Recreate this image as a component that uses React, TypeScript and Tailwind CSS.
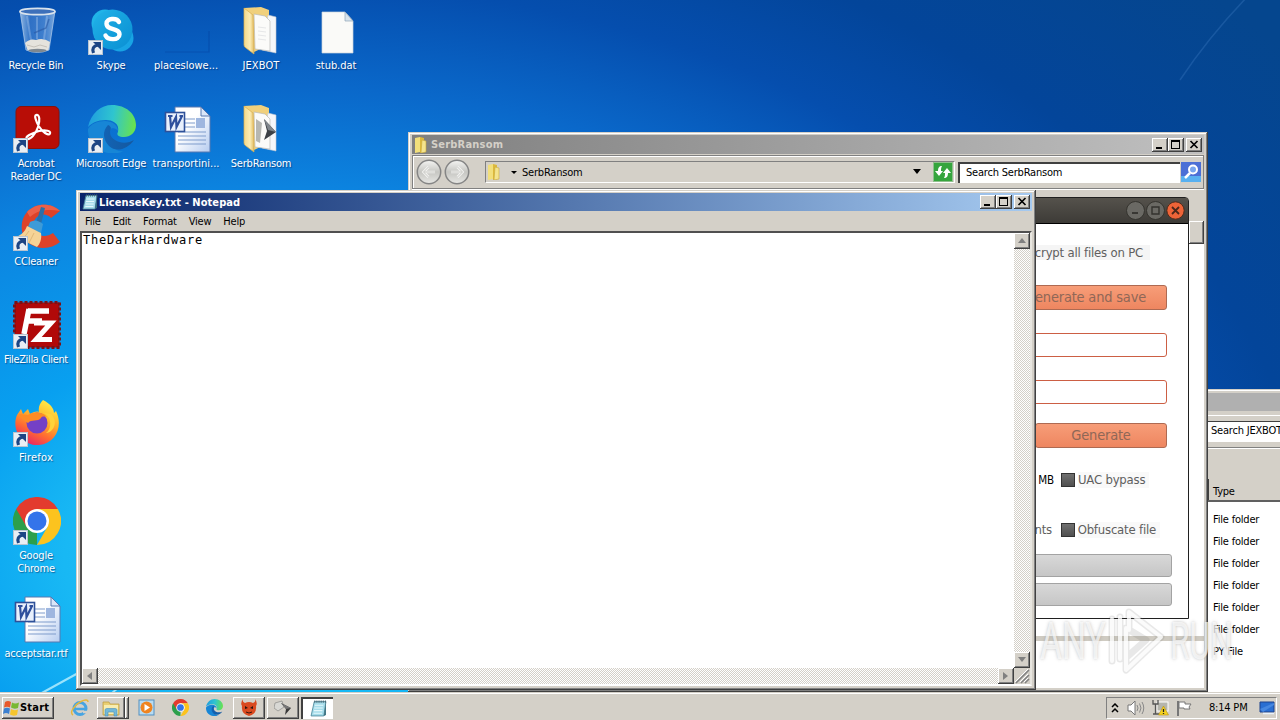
import React from 'react';
import clsx from 'clsx';

const RAISED = 'bg-[#d4d0c8] shadow-[inset_-1px_-1px_0_#404040,inset_1px_1px_0_#fff,inset_-2px_-2px_0_#808080]';
const FRAME = 'bg-[#d4d0c8] shadow-[inset_-1px_-1px_0_#404040,inset_1px_1px_0_#d4d0c8,inset_-2px_-2px_0_#808080,inset_2px_2px_0_#fff]';
const TRACK = 'bg-[repeating-conic-gradient(#d4d0c8_0_25%,#fff_0_50%)] bg-[length:2px_2px]';

type IconProps = { size?: number };

const Shortcut = () => (
  <svg className="absolute bottom-0 left-0" width="15" height="15" viewBox="0 0 15 15">
    <rect width="15" height="15" fill="#e9eef4" />
    <rect x=".5" y=".5" width="14" height="14" fill="none" stroke="#b8c4d0" />
    <path d="M5 2h8v8z" fill="#1d4584" />
    <path d="M10 5Q3 6.500 5.500 13" fill="none" stroke="#1d4584" strokeWidth="3.200" />
  </svg>
);

const RecycleBin = () => (
  <svg width="48" height="48" viewBox="0 0 48 48">
    <defs>
      <linearGradient id="bin" x1="0" x2="1">
        <stop offset="0" stopColor="#c3dcf4" stopOpacity=".75" />
        <stop offset=".3" stopColor="#4b86d2" stopOpacity=".6" />
        <stop offset=".7" stopColor="#5f97dc" stopOpacity=".65" />
        <stop offset="1" stopColor="#a9caee" stopOpacity=".7" />
      </linearGradient>
    </defs>
    <path d="M7 4l6 39q11 5 23 0l6-39z" fill="url(#bin)" stroke="#a9c7e8" strokeWidth=".8" />
    <path d="M12 36q5-5 11-3 7-3 14 2l-1.500 8q-11 4-21 0z" fill="#e5e3dd" />
    <path d="M14 38l7 2 6-2 7 2" stroke="#c6c2ba" fill="none" />
    <path d="M14 9l4 24M34 9l-3 23M24 10v22" stroke="#e4f1ff" strokeOpacity=".25" strokeWidth="2" />
    <path d="M36 12l-3 9-12 5" stroke="#2a58a4" strokeOpacity=".6" fill="none" strokeWidth="1.500" />
    <ellipse cx="24.500" cy="4.500" rx="17.500" ry="3.200" fill="#3d70ba" stroke="#d8e2ec" strokeWidth="1.800" />
    <ellipse cx="24.500" cy="43.500" rx="9" ry="1.800" fill="#7f8890" />
  </svg>
);

const Skype = () => (
  <svg width="48" height="48" viewBox="0 0 48 48">
    <defs>
      <linearGradient id="sky" x1="0" x2="1" y2="1">
        <stop offset="0" stopColor="#22b4ea" />
        <stop offset=".5" stopColor="#15a0dc" />
        <stop offset="1" stopColor="#0a8fd4" />
      </linearGradient>
    </defs>
    <circle cx="17" cy="16" r="13.500" fill="#20b4e8" />
    <circle cx="32" cy="31" r="13.500" fill="#18a4e4" />
    <circle cx="24.500" cy="22.500" r="20" fill="url(#sky)" />
    <path d="M31 15C29 10.500 18.500 11 18.500 16.500c0 7.500 13 4 13 11 0 6-11.500 6-14 1" fill="none" stroke="#fff" strokeWidth="4.400" strokeLinecap="round" />
  </svg>
);

const FaintShape = () => (
  <svg width="48" height="48" viewBox="0 0 48 48">
    <path d="M2 45h44V24" fill="none" stroke="#04419b" strokeOpacity=".45" strokeWidth="1.200" />
  </svg>
);

const FolderOpen = ({ arrow }: { arrow?: boolean }) => (
  <svg width="48" height="48" viewBox="0 0 48 48">
    <defs>
      <linearGradient id="fold" x1="0" x2="1">
        <stop offset="0" stopColor="#f3d98a" />
        <stop offset=".6" stopColor="#fbecb4" />
        <stop offset="1" stopColor="#e3bd63" />
      </linearGradient>
    </defs>
    <path d="M6 1l17-1 8 3v35l-15 7z" fill="#f0d07c" />
    <path d="M30 8l8 2v36l-14-3z" fill="#f4f6fa" stroke="#c3c8d0" strokeWidth=".6" />
    <path d="M16 7l11 2 5 5v30l-15-2z" fill="#fbfbf9" stroke="#b9b9b4" strokeWidth=".7" />
    {arrow ? (
      <>
        <path d="M18 14l6 4-2 20-4-2z" fill="#b6b7b2" />
        <path d="M26 14l12 13-12 8 3-9z" fill="#3c4046" />
        <path d="M26 14l12 13-8-2z" fill="#80868c" />
      </>
    ) : (
      <path d="M20 20l8 1M20 24l8 1M20 28l8 1M20 32l8 1" stroke="#e6e7e8" />
    )}
    <path d="M6 1l9 7 1 39-8-6q-2-1-2-3z" fill="url(#fold)" stroke="#d9af50" strokeWidth=".7" />
  </svg>
);

const BlankFile = () => (
  <svg width="48" height="48" viewBox="0 0 48 48">
    <path d="M9 5h23l8 9v32H9z" fill="#fafaf8" stroke="#c9d3dc" strokeWidth=".7" />
    <path d="M32 5v9h8z" fill="#d8e3ec" stroke="#8fa4b8" strokeWidth=".7" />
  </svg>
);

const Acrobat = () => (
  <svg width="48" height="48" viewBox="0 0 48 48">
    <rect x="3" y="1.500" width="43" height="42" rx="5" fill="#b80d06" stroke="#8b1108" />
    <path d="M23 10c4-1 4 6 2 12-2 7-8 13-11 12-3-2 5-6 12-8 7-1.500 12 0 11 2.500-1.500 3-8-2-11-7-3-5-5-11-3-11.500z" fill="none" stroke="#fff" strokeWidth="2.200" />
  </svg>
);

const Edge = ({ size = 48 }: IconProps) => (
  <svg width={size} height={size} viewBox="0 0 48 48">
    <defs>
      <linearGradient id="edgeTop" x1="0" x2="1" y1=".5" y2=".6">
        <stop offset="0" stopColor="#1f9ddf" />
        <stop offset=".5" stopColor="#2fc5cf" />
        <stop offset="1" stopColor="#6be34a" />
      </linearGradient>
      <linearGradient id="edgeLow" x1="0" x2="1">
        <stop offset="0" stopColor="#1263b4" />
        <stop offset="1" stopColor="#15589f" />
      </linearGradient>
    </defs>
    <path d="M0 22C3 8 13 0 24 0c14 0 24 9 24 20 0 8-6 12-12 12-5 0-8-2-6-5 2-9-6-12-12-12C9 15 4 18 0 22z" fill="url(#edgeTop)" />
    <path d="M0 24c3-5 9-8 17-8 7 0 13 4 13 10-3-4-9-4-10 3-1 8 7 19 16 17-14 7-37-1-36-22z" fill="#1786d6" />
    <path d="M20 20c-6 6-5 15 1 21 7 7 19 3 25-6-5 3-13 4-19 0-5-3-6-8-4-12-1-2-2-3-3-3z" fill="url(#edgeLow)" />
  </svg>
);

const WordDoc = () => (
  <svg width="48" height="48" viewBox="0 0 48 48">
    <defs>
      <linearGradient id="doc" x1="0" x2="1" y2="1">
        <stop offset=".4" stopColor="#fff" />
        <stop offset="1" stopColor="#b6ccf0" />
      </linearGradient>
    </defs>
    <path d="M12 2h26l9 9v36H12z" fill="url(#doc)" stroke="#5878b0" />
    <path d="M38 2v9h9z" fill="#dbe6f8" stroke="#5878b0" />
    <path d="M22 14h10M22 18h10M22 22h10M15 27h28M15 31h28M15 35h28M15 39h28" stroke="#7f9ccc" strokeWidth="1.200" />
    <rect x="33" y="13" width="9" height="10" fill="#9eb6df" />
    <rect x="2.500" y="7.500" width="19" height="19" fill="#e9f0fc" stroke="#2f5199" strokeWidth="1.600" />
    <path d="M5 11h4.500M7 11l1 11 5-10 .5 10L19 11M16.500 11H20" stroke="#2e4f9c" strokeWidth="2.200" fill="none" />
  </svg>
);

const CCleaner = () => (
  <svg width="48" height="48" viewBox="0 0 48 48">
    <path d="M47 8C38-1 22 0 14 9 6 18 7 34 17 41c9 6 22 5 30-2l-7-9c-6 4-13 4-17-1-4-5-3-11 1-15 4-4 11-3 14 1z" fill="#dd4229" />
    <path d="M47 8C38-1 22 0 14 9l3 5c8-7 17-8 30-6z" fill="#ec6048" />
    <path d="M28 4l4 1-4 16-5-1z" fill="#2a6fa8" />
    <path d="M17 19q6-4 13 2l-2 9-13-6z" fill="#3d9bd8" />
    <path d="M14 23l14 7c1 6-1 11-4 14L3 34c5-2 9-5 11-11z" fill="#f5d396" />
    <path d="M16 28l-6 8M21 30l-5 10" stroke="#e0b877" />
  </svg>
);

const FileZilla = () => (
  <svg width="48" height="48" viewBox="0 0 48 48">
    <rect x="1.500" y="1.500" width="45" height="45" fill="#b10909" stroke="#7b1014" strokeWidth="3" strokeDasharray="3 2" />
    <path d="M15 10h21M16 8l-5 25M13 20h16" stroke="#fff" strokeWidth="5.500" fill="none" />
    <path d="M21 22h17L23 38.500h16" stroke="#fff" strokeWidth="5" fill="none" />
  </svg>
);

const Firefox = () => (
  <svg width="48" height="48" viewBox="0 0 48 48">
    <defs>
      <linearGradient id="fox" x1=".8" y1="0" x2=".3" y2="1">
        <stop offset="0" stopColor="#fff04a" />
        <stop offset=".4" stopColor="#ffb52a" />
        <stop offset=".7" stopColor="#ff6a32" />
        <stop offset="1" stopColor="#e8216a" />
      </linearGradient>
    </defs>
    <path d="M30 1c8 4 11 9 11 13l2-2c7 14 1 32-17 34C9 47-2 31 4 16l4-6 2 5 5-5 2 5c3-2 7-3 9-2-1-5 1-9 4-12z" fill="url(#fox)" />
    <circle cx="24" cy="24" r="10.500" fill="#7440c6" />
    <path d="M6 15l9 1c4-3 14-4 19 2-4-1-6 0-6 1-3 4-10 1-13 5-3-2-7-4-9-9z" fill="#ff8c24" />
    <path d="M31 14c8 4 8 16 2 20 9-1 12-13 5-19z" fill="#ffd33a" />
  </svg>
);

const Chrome = ({ size = 48 }: IconProps) => (
  <svg width={size} height={size} viewBox="0 0 48 48">
    <path d="M24 24L24 48A24 24 0 0 1 3.200 12z" fill="#2c9f4b" />
    <path d="M24 12h20.800A24 24 0 0 0 3.200 12l10.400 18z" fill="#e33b2e" />
    <path d="M34.400 30L24 48a24 24 0 0 0 20.800-36H24z" fill="#fcc31e" />
    <circle cx="24" cy="24" r="12" fill="#fff" />
    <circle cx="24" cy="24" r="9.500" fill="#3474ea" />
  </svg>
);

const FolderSmall = () => (
  <svg width="16" height="16" viewBox="0 0 16 16">
    <path d="M2 1l5-1v15l-5 1z" fill="#f2df7b" />
    <path d="M7 0l4 1v14l-4 1z" fill="#dcb93c" />
    <path d="M9 3l4 1v11l-5 1z" fill="#f4e48e" stroke="#c9a93a" strokeWidth=".6" />
  </svg>
);

const NotepadIcon = ({ size = 16 }: IconProps) => (
  <svg width={size} height={size} viewBox="0 0 16 16">
    <path d="M4 1.500h11L13 15H1z" fill="#a6dcea" stroke="#4b8799" strokeWidth=".8" />
    <path d="M4.500 5h8M4 7.500h8M3.700 10h8M3.300 12.500h8" stroke="#e4f8fc" />
    <path d="M4 1.500h11" stroke="#486874" strokeWidth="2" strokeDasharray="1 1" />
    <path d="M15 1.500L13 15l2-1z" fill="#39707f" />
  </svg>
);

const desktop: { label: string; icon: React.ReactNode; shortcut?: boolean; track?: string }[][] = [
  [
    { label: 'Recycle Bin', icon: <RecycleBin /> },
    { label: 'Acrobat\nReader DC', icon: <Acrobat />, shortcut: true },
    { label: 'CCleaner', icon: <CCleaner />, shortcut: true },
    { label: 'FileZilla Client', icon: <FileZilla />, shortcut: true, track: 'tracking-[-0.35px]' },
    { label: 'Firefox', icon: <Firefox />, shortcut: true, track: 'tracking-[0.2px]' },
    { label: 'Google\nChrome', icon: <Chrome />, shortcut: true },
    { label: 'acceptstar.rtf', icon: <WordDoc /> },
  ],
  [
    { label: 'Skype', icon: <Skype />, shortcut: true },
    { label: 'Microsoft Edge', icon: <Edge />, shortcut: true },
  ],
  [
    { label: 'placeslowe...', icon: <FaintShape />, track: 'tracking-[0px]' },
    { label: 'transportini...', icon: <WordDoc />, track: 'tracking-[0px]' },
  ],
  [
    { label: 'JEXBOT', icon: <FolderOpen />, track: 'tracking-[0.1px]' },
    { label: 'SerbRansom', icon: <FolderOpen arrow /> },
  ],
  [{ label: 'stub.dat', icon: <BlankFile />, track: 'tracking-[-0.05px]' }],
];

const DesktopIcons = () => (
  <div className="-ml-px flex">
    {desktop.map((col, i) => (
      <div key={i} className="flex w-[75px] flex-col">
        {col.map((item) => (
          <div key={item.label} className="flex h-[98px] flex-col items-center pt-[7px]">
            <div className="relative size-12">
              {item.icon}
              {item.shortcut && <Shortcut />}
            </div>
            <span className={clsx('-ml-px mt-1 whitespace-pre text-center leading-[13px] text-white [text-shadow:1px_1px_1px_rgba(0,20,70,0.5)]', item.track)}>
              {item.label}
            </span>
          </div>
        ))}
      </div>
    ))}
  </div>
);

const WindowButtons = () => (
  <div className="flex">
    <div className={clsx('h-[14px] w-4', RAISED)}>
      <svg width="16" height="14"><path d="M4 9h6v2H4z" /></svg>
    </div>
    <div className={clsx('h-[14px] w-4', RAISED)}>
      <svg width="16" height="14"><path d="M3 2h9v9H3zM4 4v6h7V4z" fillRule="evenodd" /></svg>
    </div>
    <div className={clsx('ml-0.5 h-[14px] w-4', RAISED)}>
      <svg width="16" height="14"><path d="M4.500 3l7 7M11.500 3l-7 7" stroke="#000" strokeWidth="1.700" /></svg>
    </div>
  </div>
);

const ScrollButton = ({ d }: { d: string }) => (
  <div className={clsx('size-4 shrink-0', RAISED)}>
    <svg width="16" height="16"><path d={d} fill="#808080" /></svg>
  </div>
);

const rowTypes = ['File folder', 'File folder', 'File folder', 'File folder', 'File folder', 'File folder', 'PY File'];

const JexbotWindow = () => (
  <div className={clsx('absolute left-[800px] top-[389px] flex h-[303px] w-[560px] flex-col pt-1', FRAME)}>
    <div className="h-[18px] bg-[#b0b0b0]" />
    <div className="mt-1 flex h-8 items-center border-t border-white pl-[408px]">
      <div className="h-[21px] w-[140px] border-t border-[#404040] bg-white pl-[3px] leading-[17px]">Search JEXBOT</div>
    </div>
    <div className="h-8 border-t border-[#808080] shadow-[inset_0_1px_0_#fff]" />
    <div className="flex h-[23px] border-b-2 border-[#606060] pl-[408px]">
      <span className="border-l border-[#404040] pl-1 pt-[2px] leading-[22px]">Type</span>
    </div>
    <div className="flex-1 bg-white pl-[413px] pt-[7px]">
      {rowTypes.map((t, i) => (
        <div key={i} className="h-[22px] leading-[22px]">{t}</div>
      ))}
    </div>
  </div>
);

const NavArrow = ({ d }: { d: string }) => (
  <svg width="26" height="26" viewBox="0 0 26 26">
    <circle cx="13" cy="13" r="11.700" fill="url(#nav)" stroke="#858585" strokeWidth="1.500" />
    <path d={d} fill="none" stroke="#f4f4f2" strokeWidth="2.600" />
    <path d={d} fill="none" stroke="#c8c8c4" strokeWidth="1" />
  </svg>
);

const SerbWindow = () => (
  <div className={clsx('absolute left-[408px] top-[132px] flex h-[560px] w-[800px] flex-col p-1 pt-[3px]', FRAME)}>
    <svg className="absolute size-0">
      <linearGradient id="nav" x2="0" y2="1">
        <stop offset="0" stopColor="#f5f5f3" />
        <stop offset=".5" stopColor="#c6c6c2" />
        <stop offset="1" stopColor="#e7e7e4" />
      </linearGradient>
    </svg>
    <div className="flex h-[19px] items-center bg-linear-to-r from-[#808080] to-[#c0c0c0] pl-px pr-0.5">
      <FolderSmall />
      <span className="ml-0.5 flex-1 font-bold tracking-[0.2px] text-[#d4d0c8]">SerbRansom</span>
      <WindowButtons />
    </div>
    <div className="mt-px flex h-[34px] items-center border border-[#808080] pl-[3px] shadow-[inset_1px_1px_0_#fff,0_1px_0_#fff]">
      <NavArrow d="M19 13H8M12.500 8L7.500 13l5 5" />
      <div className="ml-0.5 h-[26px]"><NavArrow d="M7 13h11M13.500 8l5 5-5 5" /></div>
      <div className="ml-[15px] flex h-[22px] w-[470px] items-center border border-[#808080] border-b-white border-r-white">
        <FolderSmall />
        <svg className="ml-2" width="8" height="5"><path d="M1 1h6L4 4z" /></svg>
        <span className="ml-1 flex-1">SerbRansom</span>
        <svg width="9" height="6"><path d="M0 0h8L4 5z" /></svg>
        <svg className="ml-[11px] mr-px" width="20" height="20" viewBox="0 0 20 20">
          <rect x=".5" y=".5" width="19" height="19" fill="#35a53d" stroke="#8fc08c" />
          <path d="M9 4c-3 0-4 2-4 5H2l4 5 4-5H8c0-2 0-3 1-5zM11 16c3 0 4-2 4-5h3l-4-5-4 5h2c0 2 0 3-1 5z" fill="#fff" />
        </svg>
      </div>
      <div className="ml-[3px] h-[21px] w-[222px] border-l-2 border-t-2 border-[#404040] bg-white pl-1.5 leading-[18px]">Search SerbRansom</div>
      <svg className="ml-px" width="20" height="20" viewBox="0 0 20 20">
        <rect width="20" height="20" fill="#4b6fd6" />
        <path d="M0 14h20v6H0z" fill="#58b0f0" />
        <circle cx="12" cy="7.500" r="4" fill="#79a6ee" stroke="#fff" strokeWidth="2" />
        <path d="M9 11l-5 5" stroke="#fff" strokeWidth="2.500" />
      </svg>
    </div>
    <div className="h-8" />
    <div className={clsx('ml-auto h-[23px] w-[15px]', RAISED)} />
    <div className="flex-1 bg-white" />
    <div className="h-[5px] bg-[#cfcbc2]" />
    <div className="h-[47px] bg-white" />
  </div>
);

const Check = ({ children }: { children: React.ReactNode }) => (
  <div className="flex w-[99px] items-center gap-[3px]">
    <div className="size-[14px] border border-[#333] bg-linear-to-b from-[#707070] to-[#505050]" />
    <span className="h-4 whitespace-nowrap bg-[#f9f9f9] pr-1 leading-4">{children}</span>
  </div>
);

const ORANGE = 'flex h-[25px] items-center rounded-[3px] border border-[#ae6a52] bg-linear-to-b from-[#f79d78] to-[#ee8660] text-[14.5px] text-[#8f6757]';

const RansomApp = () => (
  <div className="absolute left-[900px] top-[197px] flex h-[422px] w-[289px] flex-col rounded-t-[4px] border border-[#202020] bg-white text-[13px] text-[#606060]">
    <div className="flex h-[26px] items-center justify-end gap-px border-b border-black bg-linear-to-b from-[#55524c] to-[#3d3b37] pr-[3px]">
      <svg width="19" height="19" viewBox="0 0 19 19">
        <circle cx="9.500" cy="9.500" r="9" fill="#6a6964" stroke="#35342f" />
        <path d="M6 12h6" stroke="#33322e" strokeWidth="1.800" />
      </svg>
      <svg width="19" height="19" viewBox="0 0 19 19">
        <circle cx="9.500" cy="9.500" r="9" fill="#6a6964" stroke="#35342f" />
        <path d="M6 6h7v7H6z" fill="none" stroke="#33322e" strokeWidth="1.400" />
      </svg>
      <svg width="19" height="19" viewBox="0 0 19 19">
        <circle cx="9.500" cy="9.500" r="8.700" fill="#ee6438" stroke="#4a2a1c" />
        <path d="M6 6l7 7M13 6l-7 7" stroke="#4d281b" strokeWidth="1.800" />
      </svg>
    </div>
    <div className="flex flex-col items-end pr-[21px]">
      <span className="mr-[17px] mt-[21px] h-[15px] bg-[#f5f5f5] pr-[7px] leading-[15px]">Encrypt all files on PC</span>
      <div className={clsx('mt-[25px] w-[180px] justify-end pr-5', ORANGE)}>Generate and save</div>
      <div className="mt-[23px] h-6 w-[180px] rounded-[3px] border border-[#cc5f44]" />
      <div className="mt-[23px] h-6 w-[180px] rounded-[3px] border border-[#cc5f44]" />
      <div className={clsx('mt-[19px] w-[132px] justify-center', ORANGE)}>Generate</div>
    </div>
    <div className="mt-[22px] flex items-center justify-end gap-[7px] pr-[28px] leading-[20px]">
      <span className="text-[11.5px] text-black">MB</span>
      <Check>UAC bypass</Check>
    </div>
    <div className="mt-[30px] flex items-center justify-end gap-[9px] pr-[28px] leading-[20px]">
      <span>nts</span>
      <Check>Obfuscate file</Check>
    </div>
    <div className="mt-[14px] flex flex-col items-end gap-[6px] pr-4">
      <div className="h-[23px] w-[180px] rounded-[3px] border border-[#a3a3a3] bg-linear-to-b from-[#d8d8d8] to-[#c6c6c6]" />
      <div className="h-[23px] w-[180px] rounded-[3px] border border-[#a3a3a3] bg-linear-to-b from-[#d8d8d8] to-[#c6c6c6]" />
    </div>
  </div>
);

const NotepadWindow = () => (
  <div className={clsx('absolute left-[76px] top-[190px] flex h-[500px] w-[960px] flex-col p-1 pt-[3px]', FRAME)}>
    <div className="flex h-[18px] items-center bg-linear-to-r from-[#0a246a] to-[#a6caf0] pl-0.5 pr-0.5">
      <NotepadIcon />
      <span className="ml-px flex-1 font-bold tracking-[0.07px] text-white">LicenseKey.txt - Notepad</span>
      <WindowButtons />
    </div>
    <div className="flex h-5 items-center gap-[12px] pl-[5px] tracking-[-0.2px]">
      <span>File</span>
      <span>Edit</span>
      <span>Format</span>
      <span>View</span>
      <span>Help</span>
    </div>
    <div className="flex min-h-0 flex-1 flex-col border-2 border-b-[#fff] border-l-[#505050] border-r-[#e8e6e0] border-t-[#505050] bg-white">
      <div className="flex min-h-0 flex-1">
        <div className="flex-1 pl-px text-[12px] leading-[14px] tracking-[0.78px] [font-family:'DejaVu_Sans_Mono',monospace]">TheDarkHardware</div>
        <div className={clsx('flex w-4 flex-col justify-between', TRACK)}>
          <ScrollButton d="M8 5l4 5H4z" />
          <ScrollButton d="M8 10l4-5H4z" />
        </div>
      </div>
      <div className="flex h-4">
        <div className={clsx('flex flex-1 justify-between', TRACK)}>
          <ScrollButton d="M5 8l5-4v8z" />
          <ScrollButton d="M10 8L5 4v8z" />
        </div>
        <svg className="bg-[#d4d0c8]" width="16" height="16">
          <path d="M2 15L15 2M7 15l8-8M11 15l4-4" stroke="#808080" strokeWidth="1.500" />
          <path d="M1 14L14 1M6 14l8-8M10 14l4-4" stroke="#fff" />
        </svg>
      </div>
    </div>
  </div>
);

const Watermark = () => (
  <div className="absolute left-[1040px] top-[606px] flex h-[70px] w-[192px] items-center justify-between text-[51px] leading-none tracking-normal text-white/70 [font-family:Roboto,sans-serif] [text-shadow:0_0_4px_rgba(120,120,120,0.45)]">
    <span className="w-[62px] origin-left scale-x-[0.66]">ANY</span>
    <svg className="shrink-0" width="62" height="70" viewBox="0 0 62 70">
      <g fill="none" strokeLinejoin="round" strokeLinecap="round">
        <path d="M7 55V13M15 11v42M24 24V6l32 25-35 33V22l20 12-18 16" stroke="#707070" strokeOpacity=".16" strokeWidth="7" />
        <path d="M7 55V13M15 11v42M24 24V6l32 25-35 33V22" stroke="#fff" strokeOpacity=".8" strokeWidth="4" />
      </g>
    </svg>
    <span className="w-[62px] origin-left scale-x-[0.62]">RUN</span>
  </div>
);

const StartFlag = () => (
  <svg width="17" height="16" viewBox="0 0 17 16">
    <path d="M2 2q3-2 6 0L7 7.500Q4 6 1 7.500z" fill="#e8582a" />
    <path d="M9 2.500q3 2 7 0L15 8q-4 1.500-7-.5z" fill="#79b833" />
    <path d="M1 8.500q3-1.500 6 0L6 14q-3-2-6 0z" fill="#3c80d0" />
    <path d="M8 9q3 2 7 .5l-1 5.500q-4 1.500-7-.5z" fill="#f5c52c" />
  </svg>
);

const InternetExplorer = () => (
  <svg width="20" height="20" viewBox="0 0 20 20">
    <circle cx="10" cy="10.500" r="6" fill="none" stroke="#46a4e2" strokeWidth="3" />
    <path d="M5 11h10.500" stroke="#46a4e2" strokeWidth="2.500" />
    <path d="M13 14h5" stroke="#d4d0c8" strokeWidth="2.500" />
    <path d="M3 17C-1 15 4 7 11 3.500 15 1.500 18 1.500 18 4" fill="none" stroke="#e4b73c" strokeWidth="1.400" />
  </svg>
);

const ExplorerIcon = () => (
  <svg width="20" height="18" viewBox="0 0 20 18">
    <path d="M2 3h6l1 2h9v11H2z" fill="#e9cf72" stroke="#bf9f45" strokeWidth=".8" />
    <path d="M3 6h14v9H3z" fill="#f8edb0" />
    <path d="M4 17v-6q0-1.500 2-1.500h8q2 0 2 1.500v6h-3v-4H7v4z" fill="#73b8d8" stroke="#4c91b8" strokeWidth=".6" />
  </svg>
);

const MediaPlayer = () => (
  <svg width="17" height="17" viewBox="0 0 17 17">
    <rect x="1" y="1" width="15" height="15" fill="#b8dcf2" stroke="#528fc0" />
    <circle cx="8.500" cy="8.500" r="6" fill="#ef8420" />
    <path d="M6.500 5v7l5.500-3.500z" fill="#fff" />
  </svg>
);

const Devil = () => (
  <svg width="18" height="18" viewBox="0 0 18 18">
    <path d="M3 0Q2 3 5 4q4-2 8 0 3-1 2-4 3 4 1 7 1 8-7 10Q1 15 2 7 0 4 3 0z" fill="#d9491f" />
    <path d="M5 7l3 2-3 1zM13 7l-3 2 3 1z" fill="#2a1410" />
    <path d="M6 13q3 2 6 0" stroke="#3b160e" fill="none" />
  </svg>
);

const ArrowApp = () => (
  <svg width="18" height="16" viewBox="0 0 18 16">
    <path d="M1 3l7-2 2 6-6 4-4-3z" fill="#d8d8d4" stroke="#8b8b88" strokeWidth=".7" />
    <path d="M7 3l10 5-6 7 1-6z" fill="#3a3a3a" />
    <path d="M7 3l10 5-5 1z" fill="#777" />
  </svg>
);

const Taskbar = () => (
  <div className="absolute left-0 top-[692px] flex h-7 w-[1280px] items-center border-t border-[#d4d0c8] bg-[#d4d0c8] pt-0.5 shadow-[inset_0_1px_0_#fff]">
    <div className={clsx('ml-0.5 flex h-[22px] w-[52px] items-center pl-px', RAISED)}>
      <StartFlag />
      <span className="font-bold tracking-[0.2px]">Start</span>
    </div>
    <div className="ml-4"><InternetExplorer /></div>
    <div className="ml-[7px] flex">
      <div className={clsx('flex h-[22px] w-7 items-center justify-center', RAISED)}><ExplorerIcon /></div>
      <div className={clsx('h-[22px] w-[4px]', RAISED)} />
    </div>
    <div className="ml-[9px]"><MediaPlayer /></div>
    <div className="ml-[17px]"><Chrome size={17} /></div>
    <div className="ml-[17px]"><Edge size={17} /></div>
    <div className={clsx('ml-2.5 flex h-[22px] w-8 items-center justify-center', RAISED)}><Devil /></div>
    <div className={clsx('ml-0.5 flex h-[22px] w-8 items-center justify-center', RAISED)}><ArrowApp /></div>
    <div className="ml-0.5 flex h-[22px] w-8 items-center justify-center border-l-2 border-t-2 border-[#404040] bg-white"><NotepadIcon size={17} /></div>
    <div className="ml-auto mr-[3px] flex h-[22px] w-[171px] items-center border border-[#808080] border-b-white border-r-white pl-1">
      <svg width="8" height="10"><path d="M1 4l3-3 3 3M1 9l3-3 3 3" fill="none" stroke="#000" strokeWidth="1.500" /></svg>
      <svg className="ml-2" width="18" height="16" viewBox="0 0 18 16">
        <path d="M1 5h3l4-4v14l-4-4H1z" fill="#fff" stroke="#777" />
        <path d="M10 5q2 3 0 6M12.500 3.500q3 4.500 0 9M15 2q3.500 6 0 12" fill="none" stroke="#888" />
      </svg>
      <svg className="ml-[7px]" width="17" height="17" viewBox="0 0 17 17">
        <rect x="5" y="3" width="11" height="9" fill="#b5b5ad" stroke="#fff" />
        <path d="M1 1v4h5V1M3.500 5v10M1 15h6" fill="none" stroke="#555" strokeWidth="1.300" />
        <path d="M11.500 7l5 9h-10z" fill="#f5d21f" stroke="#b99010" strokeWidth=".6" />
        <path d="M11.500 10v3M11.500 14v1" stroke="#222" strokeWidth="1.300" />
      </svg>
      <svg className="ml-[7px]" width="17" height="16" viewBox="0 0 17 16">
        <path d="M2 1v15" stroke="#777" strokeWidth="2" />
        <path d="M3 2h6v2h6l-2 3 1 2H8V8H3z" fill="#fff" stroke="#777" />
      </svg>
      <span className="ml-4 whitespace-nowrap">8:14 PM</span>
      <svg className="ml-[12px] shrink-0" width="16" height="14" viewBox="0 0 16 14">
        <path d="M1 1h14v10H1z" fill="#2a6fd2" stroke="#1d438c" />
        <path d="M1 8l14-6v2L4 11z" fill="#4788e0" />
        <path d="M4 12.500h11" stroke="#e8f1fa" strokeWidth="1.500" />
      </svg>
    </div>
  </div>
);

export default function App() {
  return (
    <div className="relative h-[720px] w-[1280px] overflow-hidden bg-[radial-gradient(980px_640px_at_280px_560px,#22c8f8_0%,#18b8f4_22%,#08a0f0_35%,#0c84e0_58%,#0a68ca_74%,#054eae_90%,#03459a_105%,#05468e_130%)] text-[11px] leading-[13px] tracking-[-0.2px] text-black [font-family:'DejaVu_Sans_Condensed','DejaVu_Sans',sans-serif]">
      <svg className="absolute inset-0" width="1280" height="720">
        <path d="M1250 -6Q1210 35 1180 80" stroke="#5f9be0" strokeOpacity=".22" strokeWidth="1.500" fill="none" />
        <path d="M40 694L80 672M112 693l6-5" stroke="#c8f6ff" strokeOpacity=".75" strokeWidth="2" />
      </svg>
      <div className="relative">
        <DesktopIcons />
      </div>
      <JexbotWindow />
      <SerbWindow />
      <RansomApp />
      <NotepadWindow />
      <Taskbar />
      <Watermark />
    </div>
  );
}
